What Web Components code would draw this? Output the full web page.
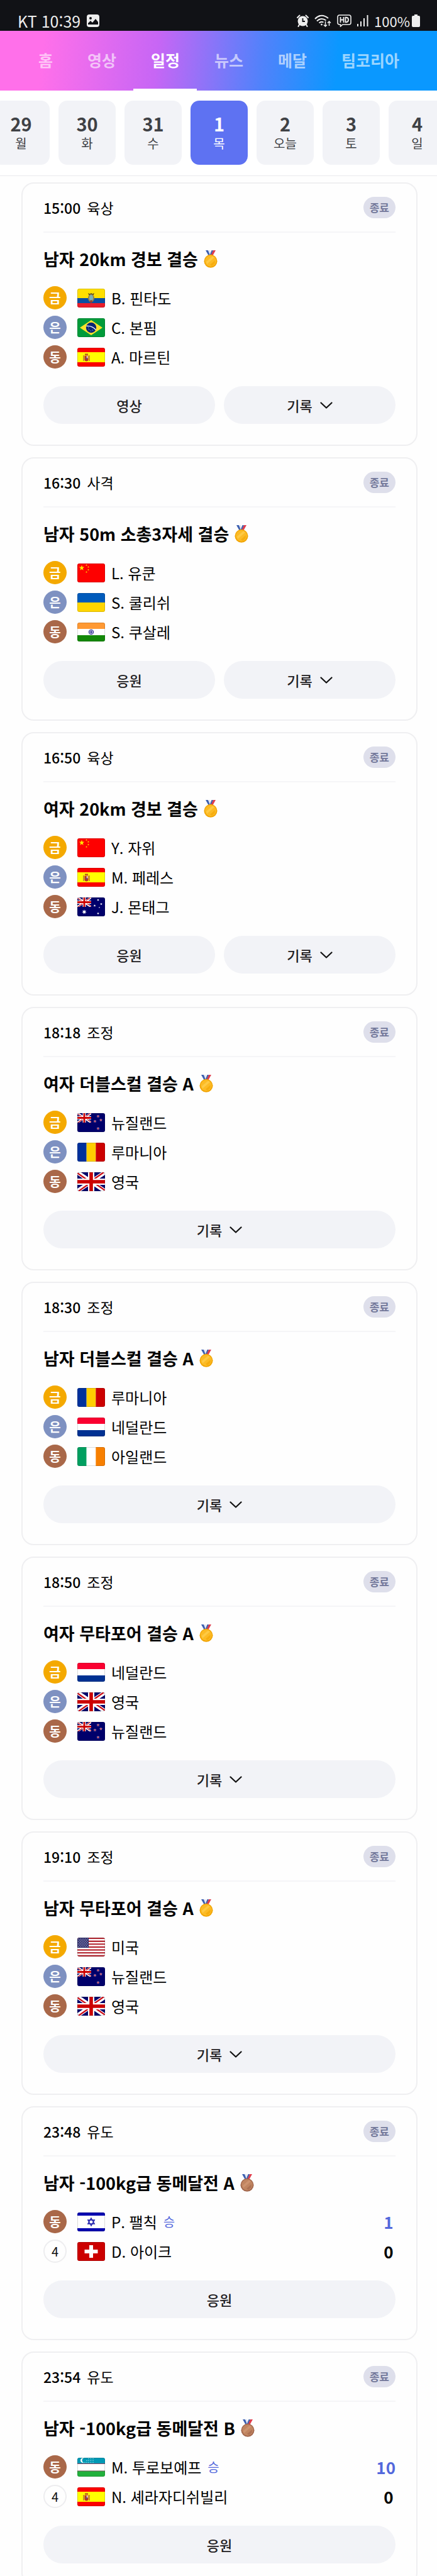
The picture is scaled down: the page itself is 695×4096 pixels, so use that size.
<!DOCTYPE html>
<html lang="ko">
<head>
<meta charset="utf-8">
<meta name="viewport" content="width=device-width, initial-scale=1">
<title>일정</title>
<style>
  html, body { height: 100%; }
  body { margin: 0; overflow: hidden; background: #fefefe; color: #000; font-family: "Noto Sans CJK KR", "Noto Sans", sans-serif; }
</style>
</head>
<body>
<schedule-app>
  <status-bar slot="top" carrier="KT" time="10:39" battery="100%"></status-bar>
  <main-nav slot="top">
    <nav-tab href="#home">홈</nav-tab>
    <nav-tab href="#video">영상</nav-tab>
    <nav-tab href="#schedule" current>일정</nav-tab>
    <nav-tab href="#news">뉴스</nav-tab>
    <nav-tab href="#medal">메달</nav-tab>
    <nav-tab href="#team">팀코리아</nav-tab>
  </main-nav>
  <date-strip slot="top">
    <date-card day="29">월</date-card>
    <date-card day="30">화</date-card>
    <date-card day="31">수</date-card>
    <date-card day="1" selected>목</date-card>
    <date-card day="2">오늘</date-card>
    <date-card day="3">토</date-card>
    <date-card day="4">일</date-card>
  </date-strip>

  <match-card time="15:00" sport="육상" medal="gold">
    <span slot="title">남자 20km 경보 결승</span>
    <rank-row rank="금" flag="ec">B. 핀타도</rank-row>
    <rank-row rank="은" flag="br">C. 본핌</rank-row>
    <rank-row rank="동" flag="es">A. 마르틴</rank-row>
    <pill-button slot="actions">영상</pill-button>
    <pill-button slot="actions" expand>기록</pill-button>
  </match-card>
  <match-card time="16:30" sport="사격" medal="gold">
    <span slot="title">남자 50m 소총3자세 결승</span>
    <rank-row rank="금" flag="cn">L. 유쿤</rank-row>
    <rank-row rank="은" flag="ua">S. 쿨리쉬</rank-row>
    <rank-row rank="동" flag="in">S. 쿠살레</rank-row>
    <pill-button slot="actions">응원</pill-button>
    <pill-button slot="actions" expand>기록</pill-button>
  </match-card>
  <match-card time="16:50" sport="육상" medal="gold">
    <span slot="title">여자 20km 경보 결승</span>
    <rank-row rank="금" flag="cn">Y. 자위</rank-row>
    <rank-row rank="은" flag="es">M. 페레스</rank-row>
    <rank-row rank="동" flag="au">J. 몬태그</rank-row>
    <pill-button slot="actions">응원</pill-button>
    <pill-button slot="actions" expand>기록</pill-button>
  </match-card>
  <match-card time="18:18" sport="조정" medal="gold">
    <span slot="title">여자 더블스컬 결승 A</span>
    <rank-row rank="금" flag="nz">뉴질랜드</rank-row>
    <rank-row rank="은" flag="ro">루마니아</rank-row>
    <rank-row rank="동" flag="gb">영국</rank-row>
    <pill-button slot="actions" expand>기록</pill-button>
  </match-card>
  <match-card time="18:30" sport="조정" medal="gold">
    <span slot="title">남자 더블스컬 결승 A</span>
    <rank-row rank="금" flag="ro">루마니아</rank-row>
    <rank-row rank="은" flag="nl">네덜란드</rank-row>
    <rank-row rank="동" flag="ie">아일랜드</rank-row>
    <pill-button slot="actions" expand>기록</pill-button>
  </match-card>
  <match-card time="18:50" sport="조정" medal="gold">
    <span slot="title">여자 무타포어 결승 A</span>
    <rank-row rank="금" flag="nl">네덜란드</rank-row>
    <rank-row rank="은" flag="gb">영국</rank-row>
    <rank-row rank="동" flag="nz">뉴질랜드</rank-row>
    <pill-button slot="actions" expand>기록</pill-button>
  </match-card>
  <match-card time="19:10" sport="조정" medal="gold">
    <span slot="title">남자 무타포어 결승 A</span>
    <rank-row rank="금" flag="us">미국</rank-row>
    <rank-row rank="은" flag="nz">뉴질랜드</rank-row>
    <rank-row rank="동" flag="gb">영국</rank-row>
    <pill-button slot="actions" expand>기록</pill-button>
  </match-card>
  <match-card time="23:48" sport="유도" medal="bronze">
    <span slot="title">남자 -100kg급 동메달전 A</span>
    <rank-row rank="동" flag="il" score="1" win>P. 팰칙</rank-row>
    <rank-row rank="4" flag="ch" score="0">D. 아이크</rank-row>
    <pill-button slot="actions">응원</pill-button>
  </match-card>
  <match-card time="23:54" sport="유도" medal="bronze">
    <span slot="title">남자 -100kg급 동메달전 B</span>
    <rank-row rank="동" flag="uz" score="10" win>M. 투로보예프</rank-row>
    <rank-row rank="4" flag="es" score="0">N. 셰라자디쉬빌리</rank-row>
    <pill-button slot="actions">응원</pill-button>
  </match-card>
</schedule-app>

<script>
const define = (name, render) => customElements.define(name, class extends HTMLElement {
  constructor() { super(); this.attachShadow({ mode: 'open' }); }
  connectedCallback() { this.shadowRoot.innerHTML = render(this); }
});
const attr = (el, name) => el.getAttribute(name) || '';

define('schedule-app', () => `
  <style>
    :host { display: flex; flex-direction: column; height: 100%; }
    header { flex: none; }
    main { flex: 1; min-height: 0; overflow: hidden; display: flex; flex-direction: column; gap: 18px; padding: 10px 31px 18px 34px; }
    ::slotted(match-card) { flex: none; }
  </style>
  <header><slot name="top"></slot></header>
  <main><slot></slot></main>`);

define('status-bar', el => `
  <style>
    :host { display: flex; justify-content: space-between; align-items: flex-end; height: 49px; padding: 0 27px 5px 28px; box-sizing: border-box; background: #111216; color: #eee; font-size: 25px; line-height: 22px; }
    div { display: flex; align-items: center; }
    .left { gap: 10px; font-weight: 400; }
    .right { gap: 9px; font-size: 22px; }
    svg { display: block; }
    .power { display: flex; gap: 3px; align-items: center; }
  </style>
  <div class="left">
    <span>${attr(el, 'carrier')} ${attr(el, 'time')}</span>
    <svg width="20" height="20" viewBox="0 0 20 20"><rect width="20" height="20" rx="4" fill="#eee"/><circle cx="6" cy="6" r="2" fill="#111216"/><path d="M2 16V14L6 10L9 13L14 7L18 12V16Z" fill="#111216"/></svg>
  </div>
  <div class="right">
    <svg width="19" height="20" viewBox="0 0 19 20"><circle cx="9.500" cy="10.500" r="8" fill="#eee"/><path d="M1 5L4.500 1.500M18 5L14.500 1.500M4 16L2.500 19M15 16L16.500 19" stroke="#eee" stroke-width="2" stroke-linecap="round"/><path d="M9.500 6V11H13" fill="none" stroke="#111216" stroke-width="1.800"/></svg>
    <svg width="27" height="20" viewBox="0 0 27 20" fill="none" stroke="#eee" stroke-width="2"><path d="M1 7Q11-3 22 6M4 10.500Q11 4 18.500 9.500M7.500 13.500Q11 10.500 14.500 12.500"/><circle cx="11.500" cy="16" r="1" fill="#eee" stroke-width="1"/><path d="M17.500 11V19M15 16.500L17.500 19L20 16.500M23.500 18V11M21 13.500L23.500 11L26 13.500" stroke-width="1.500"/></svg>
    <svg width="23" height="20" viewBox="0 0 23 20" fill="none" stroke="#eee"><path d="M4 1H19Q22 1 22 4V13Q22 16 19 16H9L5.500 19V16H4Q1 16 1 13V4Q1 1 4 1Z" stroke-width="1.600"/><path d="M5.500 4V13M10.500 4V13M5.500 8.500H10.500M13.500 4.800V12.200H15Q18 12 18 8.500Q18 5 15 4.800Z" stroke-width="1.900"/></svg>
    <svg width="18" height="20" viewBox="0 0 18 20" stroke="#eee" stroke-width="2"><path d="M1 15V19M6 11V19M11 6V19M16.500 1V19"/></svg>
    <span class="power"><span>${attr(el, 'battery')}</span>
    <svg width="13" height="20" viewBox="0 0 13 20"><path d="M4 0H9V2H11Q13 2 13 4V18Q13 20 11 20H2Q0 20 0 18V4Q0 2 2 2H4Z" fill="#eee"/></svg></span>
  </div>`);

define('main-nav', () => `
  <style>
    :host { display: block; background: linear-gradient(96deg, #ff70ea 10%, #c766f5 36%, #5082fb 60%, #0a98ff 77%); }
    nav { display: flex; padding: 0 31px 0 33px; height: 95px; }
  </style>
  <nav><slot></slot></nav>`);

define('nav-tab', el => `
  <style>
    :host { display: flex; }
    a { display: flex; align-items: center; box-sizing: border-box; padding: 0 27px 0 28px; border-bottom: 3px solid transparent; color: rgba(255,255,255,.62); text-decoration: none; font-size: 25px; line-height: 36px; font-weight: 700; white-space: nowrap; }
    :host([current]) a { color: #fff; border-bottom-color: #fff; }
  </style>
  <a href="${attr(el, 'href')}" ${el.hasAttribute('current') ? 'aria-current="page"' : ''}><slot></slot></a>`);

define('date-strip', () => `
  <style>
    :host { display: flex; justify-content: center; gap: 14px; padding: 16px 0 17px 2px; overflow: hidden; background: #fff; border-bottom: 1px solid #e9e9ec; }
  </style>
  <slot></slot>`);

define('date-card', el => `
  <style>
    :host { display: block; flex: none; width: 91px; }
    button { display: flex; flex-direction: column; align-items: center; justify-content: center; width: 100%; height: 102px; padding: 0; border: 0; border-radius: 14px; background: #f2f3f7; color: #3f4145; font-family: inherit; cursor: pointer; }
    :host([selected]) button { background: #5e72f2; color: #fff; }
    b { font-size: 29px; line-height: 34px; font-weight: 700; }
    span { font-size: 20px; line-height: 30px; }
  </style>
  <button type="button" aria-pressed="${el.hasAttribute('selected')}"><b>${attr(el, 'day')}</b><span><slot></slot></span></button>`);

define('match-card', el => `
  <style>
    :host { display: block; box-sizing: border-box; border: 2px solid #efeff1; border-radius: 20px; padding: 0 33px 33px; background: #fefefe; }
    header { display: flex; align-items: center; height: 76px; border-bottom: 2px solid #f5f5f7; font-size: 23px; line-height: 32px; }
    time { font-weight: 500; margin-right: 10px; }
    .state { margin-left: auto; padding: 0 10px; border-radius: 17px; background: #dedfeb; color: #74799b; font-size: 17px; line-height: 34px; font-weight: 700; }
    h2 { display: flex; align-items: center; gap: 9px; margin: 24px 0 25px; font-size: 27px; line-height: 36px; font-weight: 700; }
    .actions { display: flex; gap: 14px; margin-top: 18px; }
  </style>
  <header><time>${attr(el, 'time')}</time><span>${attr(el, 'sport')}</span><span class="state">종료</span></header>
  <h2><slot name="title"></slot><medal-icon kind="${attr(el, 'medal')}"></medal-icon></h2>
  <slot></slot>
  <div class="actions"><slot name="actions"></slot></div>`);

define('medal-icon', el => {
  const c = attr(el, 'kind') === 'gold' ? ['#fcbb25', '#f1a300', '#ffd45a'] : ['#c08561', '#a0644a', '#d59c7a'];
  return `
  <style>:host { display: block; } svg { display: block; }</style>
  <svg width="22" height="28" viewBox="0 0 22 28" aria-hidden="true">
    <path d="M3 0H7L12 9H8Z" fill="#3b5fb0"/><path d="M7 0H10L12 6L10 8Z" fill="#dfe6f5"/>
    <path d="M15 0H19L14 9H10Z" fill="#e03c4c"/><path d="M12.500 0H15L11.500 8H9.500Z" fill="#4460a8"/>
    <circle cx="11" cy="17.300" r="10.500" fill="${c[1]}"/><circle cx="11" cy="17" r="9" fill="${c[0]}"/>
    <path d="M4 18L14 9.500L17 11.500L5 22Z" fill="${c[2]}" opacity=".6"/><path d="M10 23L18 16L17.500 21L13 25Z" fill="${c[1]}" opacity=".6"/>
  </svg>`;
});

define('rank-row', el => {
  const rank = attr(el, 'rank');
  const kind = { '금': 'gold', '은': 'silver', '동': 'bronze' }[rank] || 'plain';
  return `
  <style>
    :host { display: flex; align-items: center; height: 37px; padding-bottom: 10px; font-size: 24px; line-height: 36px; }
    .badge { display: flex; align-items: center; justify-content: center; box-sizing: border-box; width: 37px; height: 37px; border-radius: 50%; margin-right: 17px; color: #fff; font-size: 20px; line-height: 36px; font-weight: 700; }
    .gold { background: #f4a900; }
    .silver { background: #7e91c1; }
    .bronze { background: #a96849; }
    .plain { border: 2px solid #ededef; color: #111; font-weight: 400; }
    country-flag { margin-right: 10px; }
    .win { margin-left: 10px; color: #5368dc; font-size: 20px; }
    .score { margin-left: auto; min-width: 22px; text-align: center; font-size: 26px; font-weight: 700; }
    :host([win]) .score { color: #5368dc; }
  </style>
  <span class="badge ${kind}">${rank}</span>
  <country-flag code="${attr(el, 'flag')}"></country-flag>
  <span><slot></slot></span>
  ${el.hasAttribute('win') ? '<span class="win">승</span>' : ''}
  ${el.hasAttribute('score') ? `<span class="score">${attr(el, 'score')}</span>` : ''}`;
});

define('pill-button', el => `
  <style>
    :host { display: block; flex: 1; }
    button { display: flex; align-items: center; justify-content: center; gap: 12px; width: 100%; height: 60px; padding: 0; border: 0; border-radius: 30px; background: #f2f3f7; color: #1f2023; font-family: inherit; font-size: 22px; line-height: 32px; font-weight: 500; cursor: pointer; }
    svg { display: block; margin-top: 2px; }
  </style>
  <button type="button"><span><slot></slot></span>${el.hasAttribute('expand') ? '<svg width="20" height="12" viewBox="0 0 20 12" aria-hidden="true"><path d="M1.500 1.500L10 9.500L18.500 1.500" fill="none" stroke="#111" stroke-width="2.200" stroke-linecap="round" stroke-linejoin="round"/></svg>' : ''}</button>`);

/* Flags share a 44 x 30 canvas. */
const star = (x, y, r, fill, n = 5) => {
  let p = '';
  for (let i = 0; i < n * 2; i++) {
    const a = Math.PI * i / n, q = i % 2 ? r * 0.42 : r;
    p += `${(x + q * Math.sin(a)).toFixed(2)},${(y - q * Math.cos(a)).toFixed(2)} `;
  }
  return `<polygon points="${p}" fill="${fill}"/>`;
};
const box = (x, y, w, h, fill) => `<rect x="${x}" y="${y}" width="${w}" height="${h}" fill="${fill}"/>`;
const rows = (...c) => c.map((f, i) => box(0, i * 30 / c.length, 44, 30 / c.length, f)).join('');
const cols = (...c) => c.map((f, i) => box(i * 44 / c.length, 0, 44 / c.length, 30, f)).join('');
const jack = box(0, 0, 44, 30, '#00006b') +
  '<path d="M0 0L44 30M44 0L0 30" stroke="#fff" stroke-width="6.500"/>' +
  '<path d="M0 1.200L20 15M44 28.800L24 15M42 0L22 14M2 30L22 16" stroke="#cc0a14" stroke-width="2.200"/>' +
  '<path d="M22 0V30M0 15H44" stroke="#fff" stroke-width="10"/>' +
  '<path d="M22 0V30M0 15H44" stroke="#cc0000" stroke-width="5.600"/>';
const canton = `<svg width="22" height="15" viewBox="0 0 44 30">${jack}</svg>`;
const flags = {
  ec: box(0, 0, 44, 15, '#ffdf00') + box(0, 15, 44, 8, '#0a4ea2') + box(0, 23, 44, 7, '#ea1c2a') +
    '<path d="M17 7L20 8.500L22 7L24 8.500L27 7L25 11H19Z" fill="#3a3322"/><ellipse cx="22" cy="15" rx="5" ry="6.500" fill="#9a8146"/><ellipse cx="22" cy="14.500" rx="3" ry="4.500" fill="#7fb3b5"/><path d="M19.500 21L22 17.500L24.500 21L22 23Z" fill="#94402c"/>',
  br: box(0, 0, 44, 30, '#009b3a') + '<path d="M22 3L40 15L22 27L4 15Z" fill="#fde32a"/><circle cx="22" cy="15" r="8.200" fill="#0a2575"/><path d="M14.500 12.500Q23 11.500 29.500 18.500" fill="none" stroke="#fff" stroke-width="1.400"/><path d="M18 18H19M21 20H22M24 19H25M17 15H18" stroke="#b9c3e0"/>',
  es: box(0, 0, 44, 30, '#fc0000') + box(0, 7, 44, 16, '#ffff00') +
    '<path d="M10 12V21M19 12V21" stroke="#b0683c" stroke-width="1.400"/><path d="M12 9.500H17V11.500H12Z" fill="#b63b22"/><path d="M11.500 12.500H17.500V18.500Q17.500 21.500 14.500 21.500Q11.500 21.500 11.500 18.500Z" fill="#b53328"/><path d="M14.500 13H17V16.500H14.500Z" fill="#e9b6ae"/><circle cx="14.500" cy="17" r="1.200" fill="#4b5797"/>',
  cn: box(0, 0, 44, 30, '#fe0000') + star(7, 7, 4.5, '#ffe500') + star(14.5, 2.5, 1.5, '#ffe500') + star(17.5, 5.5, 1.5, '#ffe500') + star(17.5, 10, 1.5, '#ffe500') + star(14.5, 13.5, 1.5, '#ffe500'),
  ua: rows('#005bbb', '#ffd500'),
  in: rows('#ff9933', '#ffffff', '#138808') + '<circle cx="22" cy="15" r="3.700" fill="#c6c6e6" stroke="#25258b"/><circle cx="22" cy="15" r="1.200" fill="#25258b"/><path d="M22 11.500V18.500M18.500 15H25.500" stroke="#25258b" stroke-width=".6"/>',
  au: box(0, 0, 44, 30, '#00006b') + canton + star(11, 23, 4, '#fff', 7) + star(33, 4, 2, '#fff', 7) + star(27.5, 13, 2, '#fff', 7) + star(38, 10.5, 2, '#fff', 7) + star(35, 16, 1.2, '#fff') + star(33, 25.5, 2, '#fff', 7),
  nz: box(0, 0, 44, 30, '#00006b') + canton + [[33, 5], [37.5, 11], [28, 13], [33, 24.5]].map(([x, y]) => star(x, y, 2.6, '#e8dfe8') + star(x, y, 1.7, '#cc142b')).join(''),
  ro: cols('#00319c', '#ffce00', '#cc0000'),
  gb: jack,
  nl: rows('#fa0030', '#ffffff', '#003192'),
  ie: cols('#009f60', '#ffffff', '#f77f00'),
  us: Array.from({ length: 13 }, (_, i) => box(0, i * 30 / 13, 44, 2.35, i % 2 ? '#fff' : '#b3242f')).join('') + box(0, 0, 18, 16, '#252566') +
    Array.from({ length: 7 }, (_, r) => Array.from({ length: 5 + (r + 1) % 2 }, (_, c) => `<circle cx="${1.7 + c * 2.9 + (r % 2) * 1.45}" cy="${2 + r * 2}" r=".65" fill="#d6d6ea"/>`).join('')).join(''),
  il: box(0, 0, 44, 30, '#fff') + box(0, 0, 44, 5, '#0000b0') + box(0, 25, 44, 5, '#0000b0') + '<path d="M22 9L27.200 18H16.800ZM22 21L16.800 12H27.200Z" fill="none" stroke="#1c1cab" stroke-width="1.400"/>',
  ch: box(0, 0, 44, 30, '#cc0000') + '<path d="M22 5V25M11.500 15H32.500" stroke="#fff" stroke-width="6"/>',
  uz: box(0, 0, 44, 9, '#0099b5') + box(0, 9, 44, 12, '#fff') + box(0, 21, 44, 9, '#22b13c') + box(0, 9, 44, 1, '#8f4660') + box(0, 20.5, 44, 1, '#6a5450') +
    '<path d="M11 0Q5 0 5 4.200Q5 8 11 8.300Q7.500 6.500 7.500 4.200Q7.500 1.500 11 0Z" fill="#fff"/>' +
    [[18, 1.5], [21.5, 1.5], [25, 1.5], [15, 4.5], [18, 4.5], [21.5, 4.5], [25, 4.5], [12, 7.5], [15, 7.5], [18, 7.5], [21.5, 7.5], [25, 7.5]].map(([x, y]) => `<circle cx="${x}" cy="${y}" r=".7" fill="#b9e2ea"/>`).join('')
};
define('country-flag', el => `
  <style>
    :host { display: block; flex: none; width: 44px; height: 30px; border-radius: 3px; overflow: hidden; position: relative; }
    :host::after { content: ""; position: absolute; inset: 0; border: 1px solid rgba(0,0,0,.14); border-radius: 3px; }
    svg { display: block; }
  </style>
  <svg width="44" height="30" viewBox="0 0 44 30" aria-hidden="true">${flags[attr(el, 'code')]}</svg>`);
</script>
</body>
</html>
